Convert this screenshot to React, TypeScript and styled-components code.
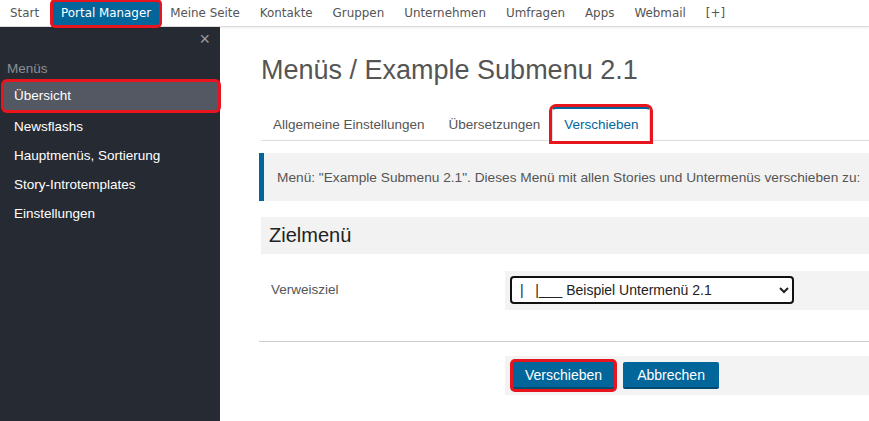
import React, { useState } from 'react';
import styled, { createGlobalStyle, css } from 'styled-components';

const GlobalStyle = createGlobalStyle`
  html, body {
    margin: 0;
    padding: 0;
    height: 100%;
    overflow: hidden;
    background: #fff;
  }
  body {
    font-family: 'Liberation Sans', Arial, sans-serif;
    font-size: 13.5px;
    color: #333;
  }
  #root {
    height: 100%;
  }
`;

const BLUE = '#02669b';

// red marker drawn round the parts the screenshot points at
const marked = css`
  box-shadow: 0 0 0 3px #e8141e;
`;

const Page = styled.div`
  display: flex;
  flex-direction: column;
  height: 421px;
`;

const TopBar = styled.nav`
  display: flex;
  align-items: center;
  height: 26px;
  background: #fff;
  border-bottom: 1px solid #dcdcdc;
  box-shadow: 0 1px 2px rgba(0, 0, 0, 0.08);
  position: relative;
  z-index: 2;
`;

const TopLink = styled.a<{ $active?: boolean }>`
  font-family: 'DejaVu Sans', Verdana, sans-serif;
  font-size: 11.9px;
  color: #555;
  padding: 3px 10px 4px;
  text-decoration: none;
  white-space: nowrap;
  ${(p) =>
    p.$active &&
    css`
      background: ${BLUE};
      color: #fff;
      border-radius: 2px;
      margin: 0 1px 0 4px;
      padding: 4px 8px 5px;
      ${marked};
    `}
`;

const Body = styled.div`
  display: flex;
  flex: 1;
  min-height: 0;
`;

const Sidebar = styled.aside`
  width: 220px;
  flex-shrink: 0;
  background: #262b33;
  padding-top: 5px;
  display: flex;
  flex-direction: column;
`;

const CloseButton = styled.button`
  align-self: flex-end;
  background: none;
  border: 0;
  color: #9a9ea4;
  font-family: 'Liberation Sans', Arial, sans-serif;
  font-size: 18px;
  line-height: 14px;
  padding: 0;
  margin-right: 10px;
  cursor: pointer;
`;

const SideTitle = styled.div`
  color: #8a8e94;
  padding: 15px 0 0 7px;
  height: 35px;
  box-sizing: border-box;
`;

const SideItem = styled.a<{ $active?: boolean }>`
  display: block;
  color: #fff;
  line-height: 28px;
  height: 28px;
  padding-left: 10px;
  margin: 1px 2px 0 4px;
  text-decoration: none;
  ${(p) =>
    p.$active &&
    css`
      background: #535862;
      border-radius: 3px;
      margin-bottom: 2px;
      ${marked};
    `}
`;

const Main = styled.main`
  flex: 1;
  min-width: 0;
  padding-left: 41px;
  overflow: hidden;
`;

const Title = styled.h1`
  font-size: 27px;
  font-weight: normal;
  color: #555;
  margin: 27px 0 0;
  line-height: 32px;
  white-space: nowrap;
`;

const Tabs = styled.div`
  display: flex;
  margin-top: 21px;
  border-bottom: 1px solid #dcdcdc;
  height: 33px;
`;

const Tab = styled.a<{ $active?: boolean }>`
  color: #555;
  padding: 0 11px;
  line-height: 31px;
  text-decoration: none;
  border: 1px solid transparent;
  border-top-width: 2px;
  white-space: nowrap;
  ${(p) =>
    p.$active &&
    css`
      color: ${BLUE};
      background: #fff;
      border-color: ${BLUE} #dcdcdc #fff;
      border-radius: 4px 4px 0 0;
      margin-bottom: -1px;
      margin-left: 0;
      ${marked};
    `}
`;

const Info = styled.div`
  margin-top: 12px;
  margin-left: -2px;
  background: #f2f2f2;
  border-left: 5px solid ${BLUE};
  height: 48px;
  display: flex;
  align-items: center;
  padding-left: 13px;
  color: #555;
  font-size: 13.7px;
  white-space: nowrap;
`;

const SectionHead = styled.div`
  margin-top: 16px;
  background: #f2f2f2;
  height: 37px;
  display: flex;
  align-items: center;
  padding-left: 8px;
  font-size: 20px;
  color: #222;
`;

const FormRow = styled.div`
  display: grid;
  grid-template-columns: 244px 1fr;
  margin-top: 17px;
  height: 39px;
`;

const Label = styled.label`
  color: #555;
  padding: 11px 0 0 10px;
`;

const Field = styled.div`
  background: #f3f3f3;
  padding: 5px;
`;

const Select = styled.select`
  width: 284px;
  height: 28px;
  border: 2px solid #111;
  border-radius: 4px;
  background: #fff;
  font-family: 'Liberation Sans', Arial, sans-serif;
  font-size: 14px;
  color: #222;
  padding: 0 4px;
  outline: none;
`;

const Divider = styled.hr`
  border: 0;
  border-top: 1px solid #cfcfcf;
  margin: 31px 0 0 -2px;
`;

const Actions = styled.div`
  display: flex;
  gap: 9px;
  margin: 14px 0 0 244px;
  background: #f3f3f3;
  padding: 6px 8px;
  height: 27px;
`;

const Button = styled.button<{ $marked?: boolean }>`
  background: ${BLUE};
  color: #fff;
  border: 0;
  border-bottom: 2px solid #034a70;
  border-radius: 2px;
  font-family: 'Liberation Sans', Arial, sans-serif;
  font-size: 14px;
  height: 27px;
  padding: 0 12px;
  min-width: 96px;
  cursor: pointer;
  ${(p) => p.$marked && marked}
`;

const topLinks = ['Start', 'Portal Manager', 'Meine Seite', 'Kontakte', 'Gruppen', 'Unternehmen', 'Umfragen', 'Apps', 'Webmail', '[+]'];
const sideLinks = ['Übersicht', 'Newsflashs', 'Hauptmenüs, Sortierung', 'Story-Introtemplates', 'Einstellungen'];
const tabs = ['Allgemeine Einstellungen', 'Übersetzungen', 'Verschieben'];

export default function App() {
  const [tab, setTab] = useState('Verschieben');
  const [target, setTarget] = useState('2.1');

  return (
    <Page>
      <GlobalStyle />
      <TopBar>
        {topLinks.map((l) => (
          <TopLink key={l} $active={l === 'Portal Manager'}>{l}</TopLink>
        ))}
      </TopBar>
      <Body>
        <Sidebar>
          <CloseButton>×</CloseButton>
          <SideTitle>Menüs</SideTitle>
          {sideLinks.map((l) => (
            <SideItem key={l} $active={l === 'Übersicht'}>{l}</SideItem>
          ))}
        </Sidebar>
        <Main>
          <Title>Menüs / Example Submenu 2.1</Title>
          <Tabs>
            {tabs.map((t) => (
              <Tab key={t} $active={t === tab} onClick={() => setTab(t)}>{t}</Tab>
            ))}
          </Tabs>
          <Info>Menü: "Example Submenu 2.1". Dieses Menü mit allen Stories und Untermenüs verschieben zu:</Info>
          <SectionHead>Zielmenü</SectionHead>
          <FormRow>
            <Label>Verweisziel</Label>
            <Field>
              <Select value={target} onChange={(e) => setTarget(e.target.value)}>
                <option value="2.1">|&nbsp;&nbsp;&nbsp;|___ Beispiel Untermenü 2.1</option>
                <option value="2">|__ Beispiel Untermenü 2</option>
              </Select>
            </Field>
          </FormRow>
          <Divider />
          <Actions>
            <Button $marked>Verschieben</Button>
            <Button>Abbrechen</Button>
          </Actions>
        </Main>
      </Body>
    </Page>
  );
}
